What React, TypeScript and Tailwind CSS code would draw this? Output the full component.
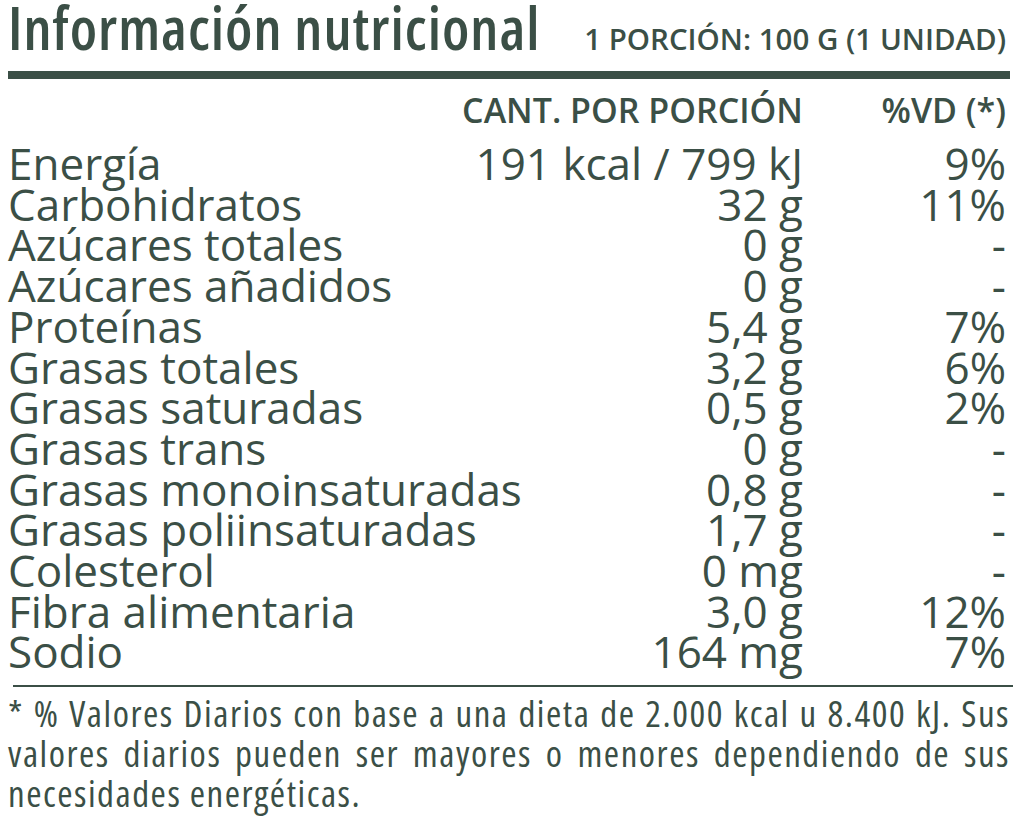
const ROWS: [string, string, string][] = [
  ['Energía', '191 kcal / 799 kJ', '9%'],
  ['Carbohidratos', '32 g', '11%'],
  ['Azúcares totales', '0 g', '-'],
  ['Azúcares añadidos', '0 g', '-'],
  ['Proteínas', '5,4 g', '7%'],
  ['Grasas totales', '3,2 g', '6%'],
  ['Grasas saturadas', '0,5 g', '2%'],
  ['Grasas trans', '0 g', '-'],
  ['Grasas monoinsaturadas', '0,8 g', '-'],
  ['Grasas poliinsaturadas', '1,7 g', '-'],
  ['Colesterol', '0 mg', '-'],
  ['Fibra alimentaria', '3,0 g', '12%'],
  ['Sodio', '164 mg', '7%'],
];

export default function App() {
  return (
    <div className="w-[1024px] h-[816px] bg-white text-[#3b4f46] font-['Open_Sans',sans-serif] overflow-hidden">
      <div className="pl-2 pr-[18px] h-[54px] flex items-baseline justify-between">
        <h1 className="text-[59px] leading-[54px] font-semibold font-stretch-condensed tracking-[1px] whitespace-nowrap">
          Información nutricional
        </h1>
        <p className="text-[29.5px] leading-[30px] font-semibold whitespace-nowrap">
          1 PORCIÓN: 100 G (1 UNIDAD)
        </p>
      </div>
      <div className="ml-2 mr-[14px] mt-[17px] h-[8px] bg-[#3b4f46]" />

      <div className="pl-2 pr-[18px] mt-[11px] grid grid-cols-[minmax(0,1fr)_auto_203px] whitespace-nowrap">
        <span />
        <span className="text-right text-[34px] leading-[40px] font-semibold">
          CANT. POR PORCIÓN
        </span>
        <span className="text-right text-[34px] leading-[40px] font-semibold">
          %VD (*)
        </span>
        <div className="col-span-3 h-[13px]" />
        {ROWS.map(([name, value, pct]) => (
          <div key={name} className="contents text-[44px] leading-[40.7px]">
            <span>{name}</span>
            <span className="text-right">{value}</span>
            <span className="text-right">{pct}</span>
          </div>
        ))}
      </div>

      <div className="ml-[13px] mr-[11px] mt-[13px] h-[2px] bg-[#3b4f46]" />

      <div className="pl-2 pr-[14px] mt-[6px] text-[37px] leading-[40px] font-stretch-condensed tracking-[1.5px]">
        <p className="text-justify [text-align-last:justify]">
          * % Valores Diarios con base a una dieta de 2.000 kcal u 8.400 kJ. Sus
        </p>
        <p className="text-justify [text-align-last:justify]">
          valores diarios pueden ser mayores o menores dependiendo de sus
        </p>
        <p>necesidades energéticas.</p>
      </div>
    </div>
  );
}
